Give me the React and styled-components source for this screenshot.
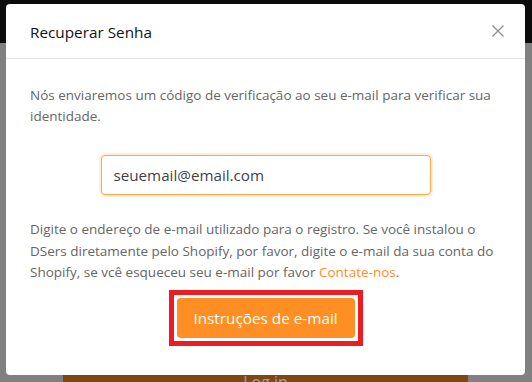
import React from 'react'
import styled, { createGlobalStyle } from 'styled-components'

const GlobalStyle = createGlobalStyle`
  html, body {
    margin: 0;
    padding: 0;
    background: #808080;
  }
  * {
    box-sizing: border-box;
  }
`

const Page = styled.div`
  width: 532px;
  height: 382px;
  overflow: hidden;
  padding-top: 4px;
  background: linear-gradient(#0c0c0c 0, #0c0c0c 43px, #808080 43px);
  font-family: 'Open Sans', 'Noto Sans', sans-serif;
`

const Modal = styled.div`
  width: 519px;
  height: 371px;
  margin-left: 6px;
  background: #fff;
  border-radius: 4px;
  display: flex;
  flex-direction: column;
`

const Header = styled.div`
  height: 55px;
  padding: 0 21px 0 24px;
  border-bottom: 1px solid #e6e6e6;
  display: flex;
  align-items: center;
  justify-content: space-between;
`

const Title = styled.div`
  font-size: 15.3px;
  color: #111118;
  padding-top: 1px;
`

const Close = styled.button`
  border: 0;
  background: none;
  padding: 0;
  width: 12px;
  height: 12px;
  display: flex;
  cursor: pointer;
`

const Body = styled.div`
  padding: 26px 24px 0 24px;
  display: flex;
  flex-direction: column;
  align-items: center;
`

const Text = styled.p`
  align-self: stretch;
  margin: 0;
  margin-top: ${props => props.gap || 0}px;
  font-size: 13.5px;
  line-height: ${props => props.lh || 21}px;
  color: #666;
`

const Link = styled.a`
  color: #ff8f24;
  text-decoration: none;
`

const Input = styled.input`
  margin-top: 28px;
  width: 330px;
  height: 40px;
  padding: 0 12px;
  border: 1px solid #ffa64d;
  border-radius: 4px;
  box-shadow: 0 0 0 2px rgba(255, 143, 36, 0.15);
  font-family: inherit;
  font-size: 15.2px;
  color: #3f3f4a;
  outline: none;
`

const Highlight = styled.div`
  margin-top: 6px;
  border: 5px solid #ec1c24;
  padding: 3px;
  display: flex;
`

const SubmitButton = styled.button`
  width: 178px;
  height: 40px;
  border: 0;
  border-radius: 4px;
  background: #ff8f24;
  color: #fff;
  font-family: inherit;
  font-size: 15.3px;
  cursor: pointer;
`

const LoginBar = styled.div`
  width: 405px;
  height: 40px;
  margin-left: 63px;
  background: #7f4712;
  color: #a0a0a0;
  font-size: 16px;
  text-align: center;
  line-height: 14px;
`

const App = () => (
  <>
    <GlobalStyle />
    <Page>
      <Modal>
        <Header>
          <Title>Recuperar Senha</Title>
          <Close aria-label="Fechar">
            <svg width="12" height="12" viewBox="0 0 12 12">
              <path d="M0.5 0.5 L11.5 11.5 M11.5 0.5 L0.5 11.5" stroke="#8c8c8c" strokeWidth="1.2" fill="none" />
            </svg>
          </Close>
        </Header>
        <Body>
          <Text>
            Nós enviaremos um código de verificação ao seu e-mail para verificar sua identidade.
          </Text>
          <Input defaultValue="seuemail@email.com" />
          <Text gap={24} lh={21.5}>
            Digite o endereço de e-mail utilizado para o registro. Se você instalou o DSers diretamente
            pelo Shopify, por favor, digite o e-mail da sua conta do Shopify, se vcê esqueceu seu e-mail
            por favor <Link href="#">Contate-nos</Link>.
          </Text>
          <Highlight>
            <SubmitButton>Instruções de e-mail</SubmitButton>
          </Highlight>
        </Body>
      </Modal>
      <LoginBar>Log in</LoginBar>
    </Page>
  </>
)

export default App
